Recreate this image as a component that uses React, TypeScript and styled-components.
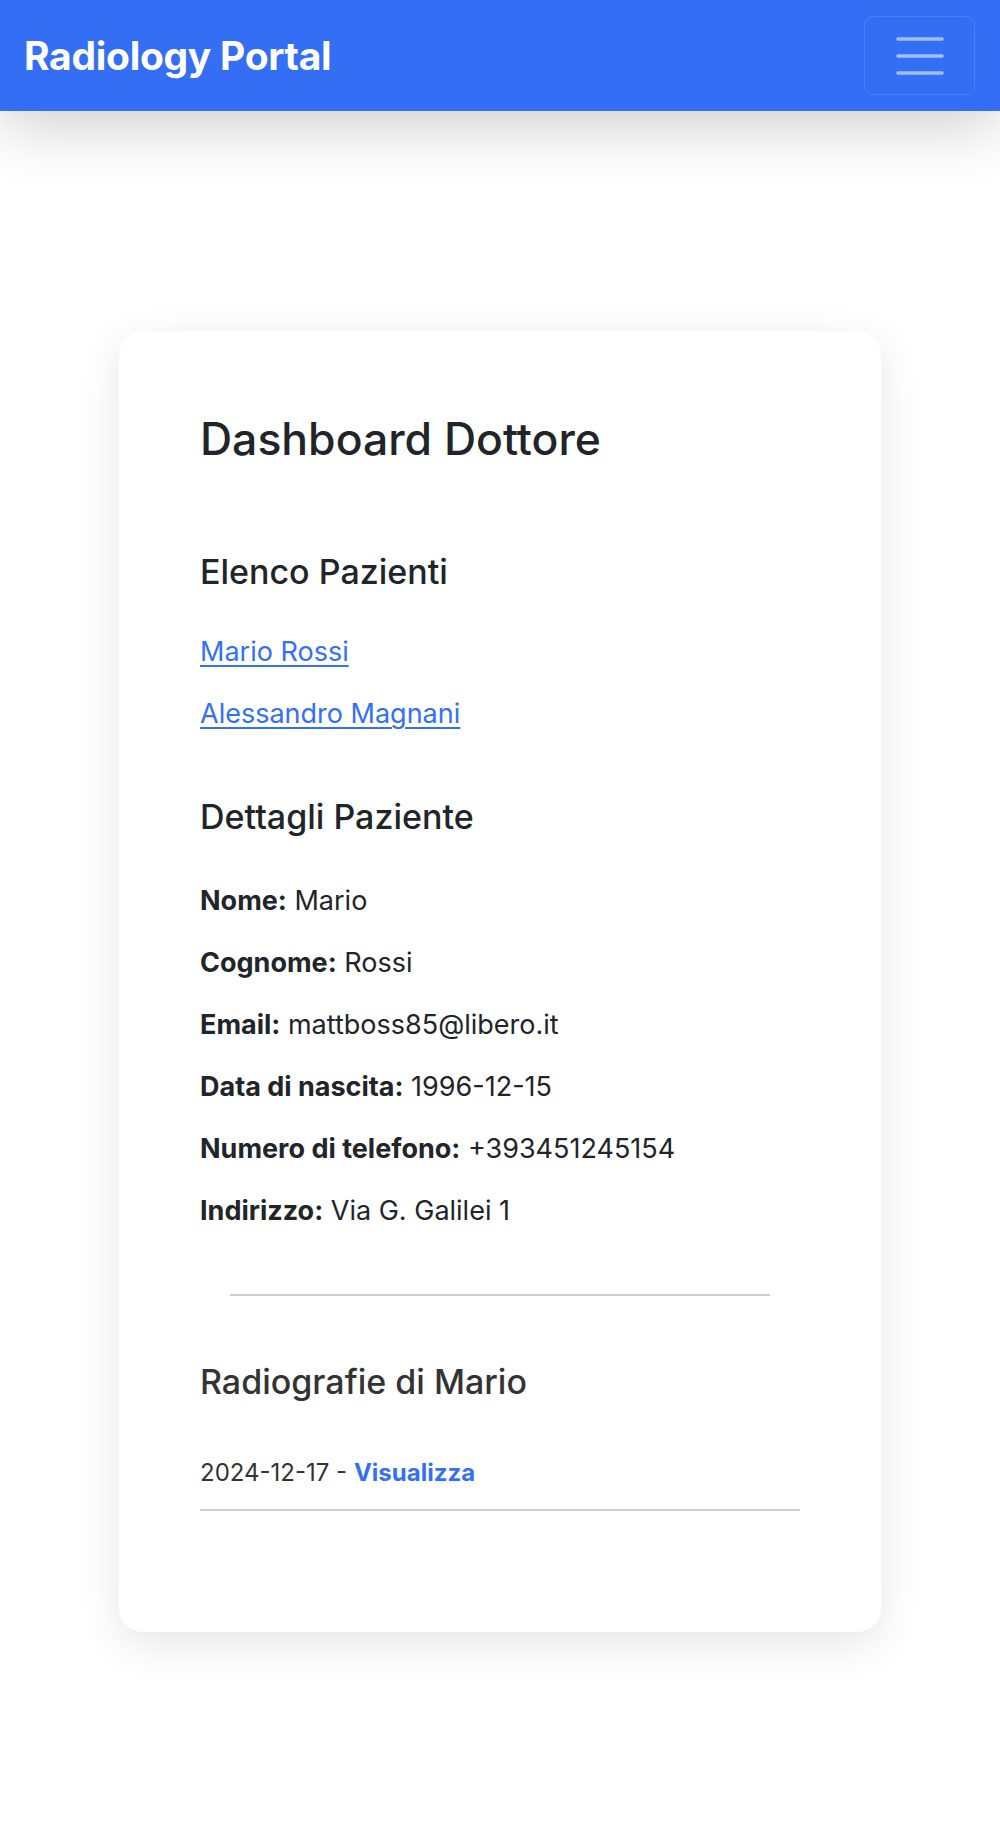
import React from "react";
import styled, { createGlobalStyle } from "styled-components";

const Global = createGlobalStyle`
  html, body { margin: 0; padding: 0; background: #ffffff; }
  body { font-family: Inter, "Noto Sans", "Liberation Sans", sans-serif; color: #212529; }
  * { box-sizing: border-box; }
`;

const Page = styled.div`
  min-height: 1834px;
  display: flex;
  flex-direction: column;
`;

const NavBar = styled.header`
  height: 111px;
  background: #336ef4;
  display: flex;
  align-items: center;
  justify-content: space-between;
  padding: 0 25px 0 24px;
  box-shadow: 0 14px 64px rgba(0, 0, 0, 0.2);
  position: relative;
  z-index: 1;
`;

const Brand = styled.a`
  color: #ffffff;
  font-weight: 700;
  font-size: 39px;
  letter-spacing: -0.3px;
  text-decoration: none;
`;

const Toggler = styled.button`
  width: 111px;
  height: 79px;
  background: transparent;
  border: 1.5px solid rgba(255, 255, 255, 0.12);
  border-radius: 9px;
  display: flex;
  align-items: center;
  justify-content: center;
  padding: 0;
`;

const Card = styled.main`
  width: 762px;
  margin: 220px auto 0;
  background: #ffffff;
  border-radius: 24px;
  padding: 82px 81px 121px;
  box-shadow: 0 12px 44px rgba(0, 0, 0, 0.1);
`;

const Title = styled.h1`
  margin: 0 0 85px;
  font-size: 44.5px;
  line-height: 53px;
  font-weight: 500;
  color: #212529;
`;

const SectionTitle = styled.h3<{ $muted?: boolean; $gap: number }>`
  margin: 0 0 ${(p) => p.$gap}px;
  font-size: 34px;
  line-height: 41px;
  font-weight: 500;
  color: ${(p) => (p.$muted ? "#333333" : "#212529")};
`;

const LinkList = styled.div`
  display: flex;
  flex-direction: column;
  align-items: flex-start;
  gap: 22px;
  margin-bottom: 62px;
`;

const PatientLink = styled.a`
  font-size: 27px;
  line-height: 40px;
  color: #3370f5;
  text-decoration: underline;
  text-underline-offset: 4px;
  text-decoration-thickness: 1.5px;
`;

const Details = styled.div`
  display: flex;
  flex-direction: column;
  gap: 22px;
`;

const Row = styled.p`
  margin: 0;
  font-size: 27px;
  line-height: 40px;
  color: #212529;
  b { font-weight: 700; }
`;

const Divider = styled.hr`
  width: 90%;
  margin: 63px auto 65px;
  border: 0;
  border-top: 2px solid #cccccc;
`;

const XrayItem = styled.div`
  margin-top: 53px;
  padding-bottom: 18px;
  border-bottom: 2px solid #cccccc;
  font-size: 24px;
  line-height: 36px;
  color: #333333;
`;

const ViewLink = styled.a`
  color: #3370f5;
  font-weight: 700;
  text-decoration: none;
`;

function Hamburger() {
  return (
    <svg width="48" height="38" viewBox="0 0 48 38">
      <g stroke="rgba(255,255,255,0.55)" strokeWidth="3.5" strokeLinecap="round">
        <line x1="2" y1="2" x2="46" y2="2" />
        <line x1="2" y1="19" x2="46" y2="19" />
        <line x1="2" y1="36" x2="46" y2="36" />
      </g>
    </svg>
  );
}

export default function App() {
  const rows: [string, string][] = [
    ["Nome:", "Mario"],
    ["Cognome:", "Rossi"],
    ["Email:", "mattboss85@libero.it"],
    ["Data di nascita:", "1996-12-15"],
    ["Numero di telefono:", "+393451245154"],
    ["Indirizzo:", "Via G. Galilei 1"],
  ];
  return (
    <>
      <Global />
      <Page>
        <NavBar>
          <Brand href="#">Radiology Portal</Brand>
          <Toggler aria-label="menu">
            <Hamburger />
          </Toggler>
        </NavBar>
        <Card>
          <Title>Dashboard Dottore</Title>
          <SectionTitle $gap={40}>Elenco Pazienti</SectionTitle>
          <LinkList>
            <PatientLink href="#">Mario Rossi</PatientLink>
            <PatientLink href="#">Alessandro Magnani</PatientLink>
          </LinkList>
          <SectionTitle $gap={44}>Dettagli Paziente</SectionTitle>
          <Details>
            {rows.map(([k, v]) => (
              <Row key={k}>
                <b>{k}</b> {v}
              </Row>
            ))}
          </Details>
          <Divider />
          <SectionTitle $muted $gap={0}>Radiografie di Mario</SectionTitle>
          <XrayItem>
            2024-12-17 - <ViewLink href="#">Visualizza</ViewLink>
          </XrayItem>
        </Card>
      </Page>
    </>
  );
}
